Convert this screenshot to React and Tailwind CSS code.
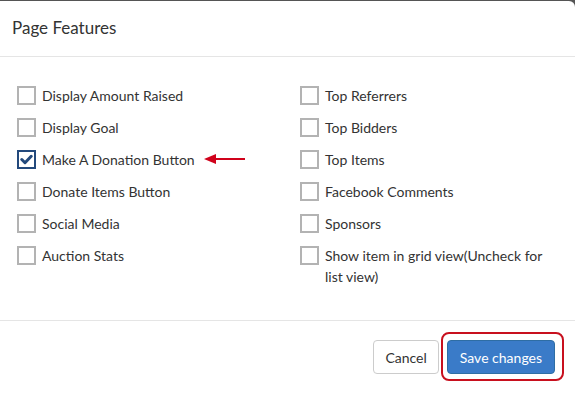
const LEFT = [
  { label: 'Display Amount Raised' },
  { label: 'Display Goal' },
  { label: 'Make A Donation Button', checked: true, arrow: true },
  { label: 'Donate Items Button' },
  { label: 'Social Media' },
  { label: 'Auction Stats' },
]

const RIGHT = [
  { label: 'Top Referrers' },
  { label: 'Top Bidders' },
  { label: 'Top Items' },
  { label: 'Facebook Comments' },
  { label: 'Sponsors' },
  { label: 'Show item in grid view(Uncheck for list view)' },
]

function Box({ checked }) {
  return (
    <span
      className={`mt-[1px] grid h-[19px] w-[19px] shrink-0 place-items-center border-2 bg-white ${
        checked ? 'border-[#23497c]' : 'border-[#b3b3b3]'
      }`}
    >
      {checked && (
        <svg width="13" height="11" viewBox="0 0 13 11">
          <path d="M1.8 5.5 L5 8.7 L11.2 2.3" fill="none" stroke="#23497c" strokeWidth="3" strokeLinecap="round" strokeLinejoin="round" />
        </svg>
      )}
    </span>
  )
}

function Item({ item }) {
  return (
    <div className="flex items-start gap-[6px]">
      <Box checked={item.checked} />
      <span className="max-w-[222px] text-[14px] leading-[21px] text-[#333]">{item.label}</span>
      {item.arrow && (
        <svg className="ml-[2px] mt-[4px]" width="44" height="12" viewBox="0 0 44 12">
          <line x1="10" y1="6" x2="42" y2="6" stroke="#d0021b" strokeWidth="2" />
          <path d="M1 6 L13 1 L13 11 Z" fill="#d0021b" />
        </svg>
      )}
    </div>
  )
}

export default function App() {
  return (
    <div className="h-[393px] w-[575px] overflow-hidden bg-[#555] pt-[1px]" style={{ fontFamily: 'Lato, "Liberation Sans", sans-serif' }}>
      <div className="flex h-full flex-col rounded-tr-[6px] bg-white">
        <div className="flex h-[56px] items-center border-b border-[#e5e5e5] px-[12px] pb-[2px]">
          <h1 className="text-[17px] text-[#333]">Page Features</h1>
        </div>
        <div className="grid h-[263px] grid-cols-2 gap-x-[18px] pl-[17px] pr-[10px] pt-[28px]">
          <div className="flex flex-col gap-[11px]">
            {LEFT.map((it) => (
              <Item key={it.label} item={it} />
            ))}
          </div>
          <div className="flex flex-col gap-[11px]">
            {RIGHT.map((it) => (
              <Item key={it.label} item={it} />
            ))}
          </div>
        </div>
        <div className="flex flex-1 items-start justify-end gap-[2px] border-t border-[#e5e5e5] pr-[11px] pt-[11px]">
          <button className="mt-[8px] h-[34px] rounded-[4px] border border-[#ccc] bg-white px-[11px] text-[14px] text-[#333]">Cancel</button>
          <div className="rounded-[8px] border-2 border-[#c8101e] pb-[5px] pl-[4px] pr-[7px] pt-[6px]">
            <button className="h-[34px] rounded-[4px] border border-[#2e6da4] bg-[#3a7bc8] px-[12px] text-[14px] text-white">Save changes</button>
          </div>
        </div>
      </div>
    </div>
  )
}
